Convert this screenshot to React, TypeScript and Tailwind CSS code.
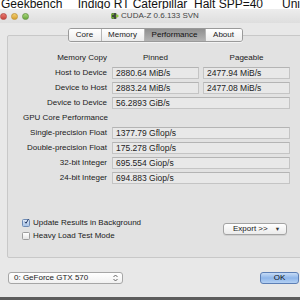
import React from 'react';

interface PerfRow {
  label: string;
  pinned?: string;
  pageable?: string;
  heading?: boolean;
}

const rows: PerfRow[] = [
  { label: 'Host to Device', pinned: '2880.64 MiB/s', pageable: '2477.94 MiB/s' },
  { label: 'Device to Host', pinned: '2883.24 MiB/s', pageable: '2477.08 MiB/s' },
  { label: 'Device to Device', pinned: '56.2893 GiB/s' },
  { label: 'GPU Core Performance', heading: true },
  { label: 'Single-precision Float', pinned: '1377.79 Gflop/s' },
  { label: 'Double-precision Float', pinned: '175.278 Gflop/s' },
  { label: '32-bit Integer', pinned: '695.554 Giop/s' },
  { label: '24-bit Integer', pinned: '694.883 Giop/s' },
];

const tabs = [
  { name: 'Core', width: 'w-[32px]' },
  { name: 'Memory', width: 'w-[43px]' },
  { name: 'Performance', width: 'w-[61px]' },
  { name: 'About', width: 'w-[37px]' },
];

const ValueBox = ({ value, wide }: { value: string; wide?: boolean }) => (
  <div
    className={`${wide ? 'w-[178px]' : 'w-[87px]'} h-[12px] flex items-center px-[3px] border border-[#c4c4c4] border-t-[#b4b4b4] bg-[#e8e8e8] text-[8.5px] leading-[10px] text-[#1c1c1c]`}
  >
    {value}
  </div>
);

const Checkbox = ({ checked, label }: { checked?: boolean; label: string }) => (
  <div className="h-[13px] flex items-center gap-[3px]">
    <div
      className={`w-[8px] h-[8px] rounded-[1.5px] border flex items-center justify-center ${
        checked
          ? 'border-[#6d8bb5] bg-gradient-to-b from-[#dfe9f7] to-[#a9c3e6]'
          : 'border-[#9d9d9d] bg-gradient-to-b from-[#ffffff] to-[#e4e4e4]'
      }`}
    >
      {checked && (
        <svg width="8" height="9" viewBox="0 0 8 9" className="-mt-[2px] ml-[1px]">
          <path d="M1.2 5 L3.2 7.3 L7.2 0.8" fill="none" stroke="#1f3460" strokeWidth="1.6" />
        </svg>
      )}
    </div>
    <span className="text-[8px] leading-[10px] text-[#1a1a1a]">{label}</span>
  </div>
);

const CudaIcon = () => (
  <svg width="8" height="8" viewBox="0 0 8 8">
    <rect x="0.5" y="1" width="5" height="6" rx="1" fill="#3f4a3c" />
    <path d="M3 2.2 A2 2 0 1 0 3 5.8" fill="none" stroke="#7dbb3a" strokeWidth="1.3" />
    <circle cx="6.2" cy="4" r="1.4" fill="#8cc63f" />
  </svg>
);

export default function App() {
  return (
    <div className="w-[300px] h-[300px] overflow-hidden bg-[#5c5c5c] font-['Liberation_Sans',Arial,sans-serif]">
      {/* desktop window behind, cut at the top */}
      <div className="h-[9px] overflow-hidden bg-white">
        <div className="flex -mt-[2px] text-[12px] leading-[12px] text-[#111] whitespace-nowrap">
          <span className="ml-[1px] w-[77px]">Geekbench</span>
          <span className="w-[205px]">Indigo RT Caterpillar&nbsp; Halt SPP=40</span>
          <span>Uni</span>
        </div>
      </div>

      <div className="w-[310px] h-[288px] flex flex-col bg-[#e8e8e8]">
        {/* title bar */}
        <div className="relative h-[14px] flex items-center justify-center bg-gradient-to-b from-[#ededed] to-[#dedede]">
          <div className="absolute left-0 top-[3.5px] flex gap-[4px]">
            <div className="w-[7px] h-[7px] rounded-full bg-gradient-to-b from-[#e97a72] to-[#c9423a] border border-[#b8504a]" />
            <div className="w-[7px] h-[7px] rounded-full bg-gradient-to-b from-[#f2cf6f] to-[#d9a02a] border border-[#c59a3c]" />
            <div className="w-[7px] h-[7px] rounded-full bg-gradient-to-b from-[#a9d77a] to-[#68a83b] border border-[#6b9a48]" />
          </div>
          <div className="flex items-center gap-[2px]">
            <CudaIcon />
            <span className="text-[8px] leading-[10px] text-[#444]">CUDA-Z 0.6.133 SVN</span>
          </div>
        </div>

        {/* content */}
        <div className="flex-1 flex flex-col px-[7px] pt-[5px]">
          <div className="relative z-10 h-[14px] -mb-[7px] flex justify-center">
            <div className="flex h-[14px] rounded-[3px] border border-[#9a9a9a] overflow-hidden shadow-[0_1px_0_rgba(255,255,255,0.6)]">
              {tabs.map((t, i) => (
                <div
                  key={t.name}
                  className={`${t.width} h-full flex items-center justify-center text-[8px] leading-[10px] ${
                    i > 0 ? 'border-l border-[#b5b5b5]' : ''
                  } ${
                    t.name === 'Performance'
                      ? 'bg-gradient-to-b from-[#8f8f8f] to-[#b3b3b3] text-[#111]'
                      : 'bg-gradient-to-b from-[#ffffff] to-[#ececec] text-[#1a1a1a]'
                  }`}
                >
                  {t.name}
                </div>
              ))}
            </div>
          </div>

          <div className="h-[223px] flex flex-col border border-[#c8c8c8] rounded-[2px] bg-[#e2e2e2] pt-[14px]">
            <div className="h-[15px] flex items-center text-[8px] leading-[10px] text-[#1a1a1a]">
              <div className="w-[99px] text-right">Memory Copy</div>
              <div className="ml-[5px] w-[87px] text-center">Pinned</div>
              <div className="ml-[4px] w-[87px] text-center">Pageable</div>
            </div>
            {rows.map(r =>
              r.heading ? (
                <div key={r.label} className="h-[15px] flex items-center pl-[15px] text-[8px] leading-[10px] text-[#1a1a1a]">
                  {r.label}
                </div>
              ) : (
                <div key={r.label} className="h-[15px] flex items-center">
                  <div className="w-[99px] text-right text-[8px] leading-[10px] text-[#1a1a1a] whitespace-nowrap">{r.label}</div>
                  <div className="ml-[5px] flex gap-[4px]">
                    {r.pageable ? (
                      <>
                        <ValueBox value={r.pinned!} />
                        <ValueBox value={r.pageable} />
                      </>
                    ) : (
                      <ValueBox value={r.pinned!} wide />
                    )}
                  </div>
                </div>
              )
            )}

            <div className="mt-[31px] flex justify-between items-start">
              <div className="pl-[14px] flex flex-col">
                <Checkbox checked label="Update Results in Background" />
                <Checkbox label="Heavy Load Test Mode" />
              </div>
              <div className="mt-[7px] mr-[15px] w-[64px] h-[12px] flex items-center rounded-[3px] border border-[#a3a3a3] bg-gradient-to-b from-[#ffffff] to-[#ebebeb] shadow-[0_1px_0_rgba(0,0,0,0.08)]">
                <span className="ml-[9px] text-[8px] leading-[10px] text-[#1a1a1a]">Export &gt;&gt;</span>
                <span className="ml-[7px] text-[5.5px] leading-[6px] text-[#333]">▼</span>
              </div>
            </div>
          </div>

          <div className="mt-[14px] flex justify-between items-start">
            <div className="ml-[1px] w-[115px] h-[12px] flex items-center justify-between rounded-[3px] border border-[#a6a6a6] bg-gradient-to-b from-[#ffffff] to-[#f1f1f1]">
              <span className="ml-[5px] text-[8px] leading-[10px] text-[#1a1a1a]">0: GeForce GTX 570</span>
              <svg width="5" height="8" viewBox="0 0 5 8" className="mr-[4px]">
                <path d="M0.5 3 L2.5 1 L4.5 3" fill="none" stroke="#555" strokeWidth="0.9" />
                <path d="M0.5 5 L2.5 7 L4.5 5" fill="none" stroke="#555" strokeWidth="0.9" />
              </svg>
            </div>
            <div className="mr-[4px] w-[39px] h-[12px] flex items-center justify-center rounded-[3px] border border-[#5d7fb5] bg-gradient-to-b from-[#c7dcf6] via-[#8fb6ea] to-[#b3d0f3] text-[8px] leading-[10px] text-[#111]">
              OK
            </div>
          </div>
        </div>
      </div>
      <div className="h-[3px] bg-[#5c5c5c]" />
    </div>
  );
}
